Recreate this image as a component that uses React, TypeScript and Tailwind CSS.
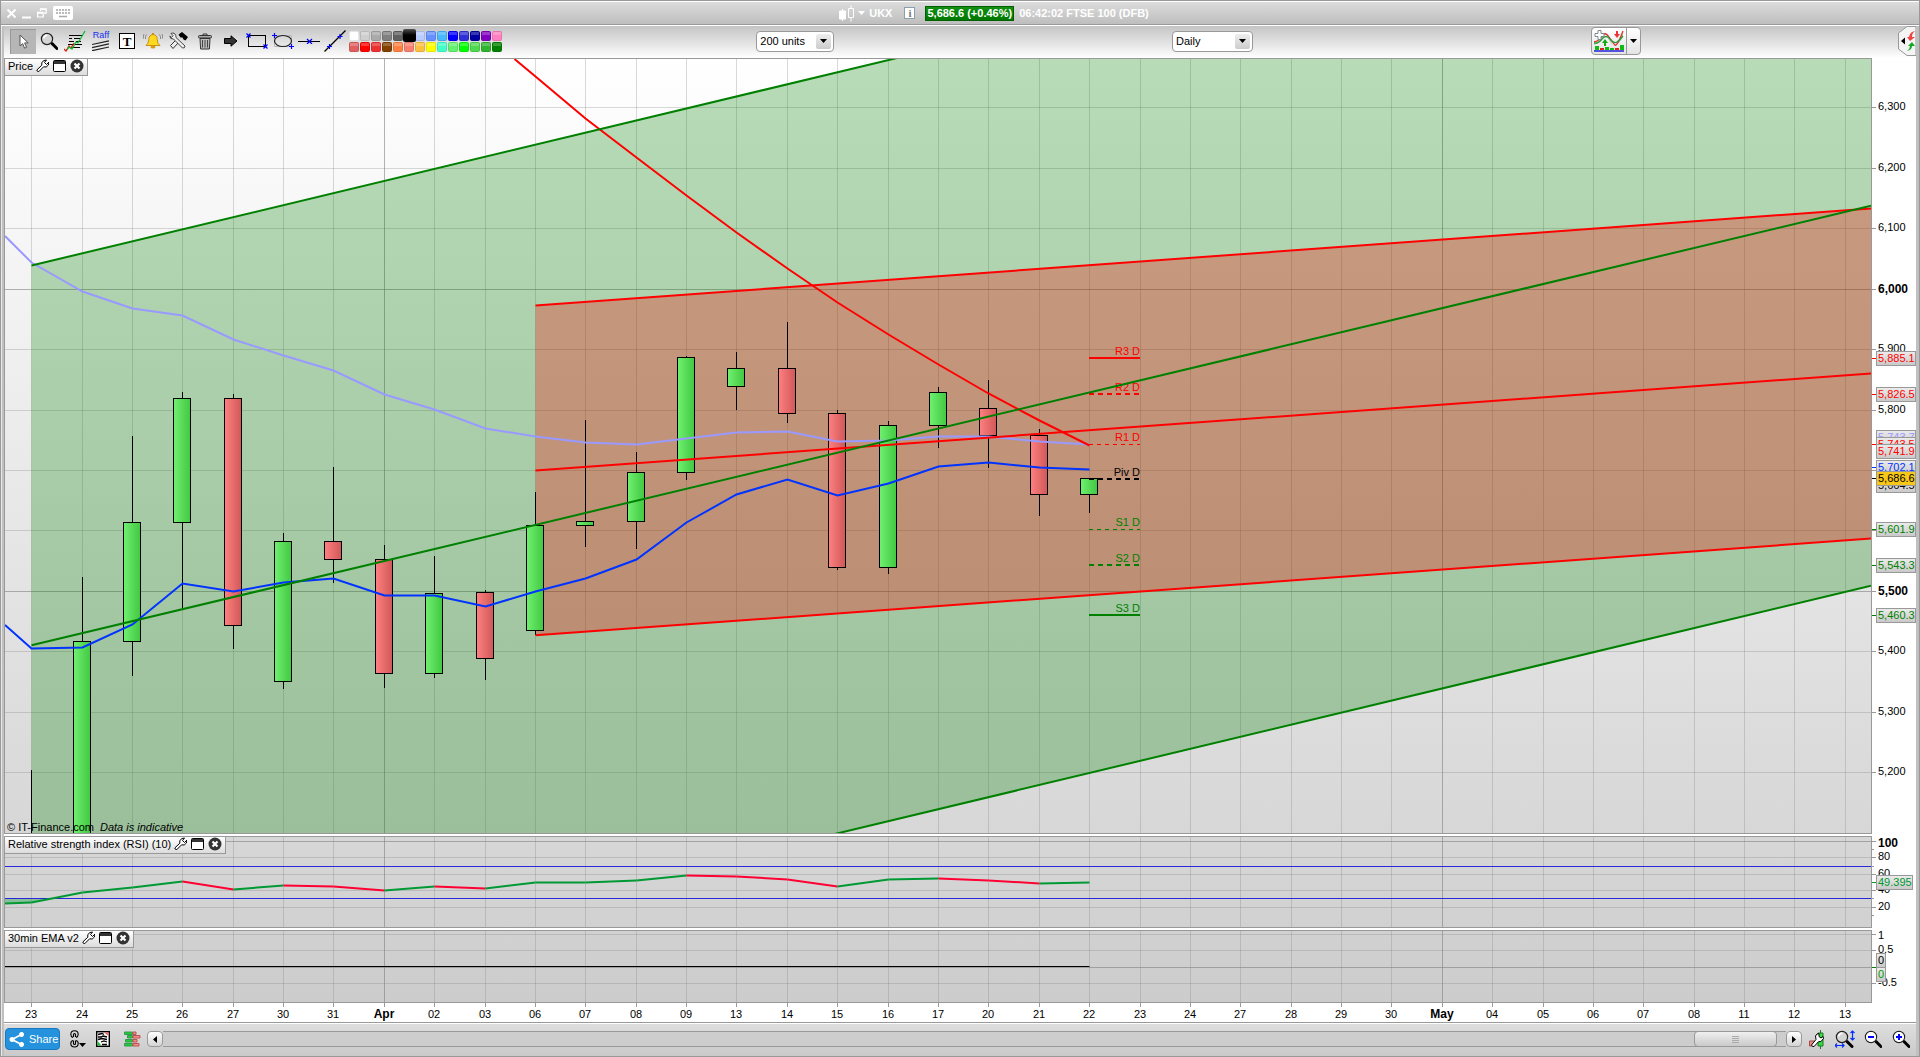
import React from "react";

type Point = [number, number];

const DATES = [
  "23", "24", "25", "26", "27", "30", "31", "Apr", "02", "03", "06", "07", "08", "09", "13", "14", "15", "16", "17",
  "20", "21", "22", "23", "24", "27", "28", "29", "30", "May", "04", "05", "06", "07", "08", "11", "12", "13",
];

const isMonth = (label: string) => label === "Apr" || label === "May";
const colX = (i: number) => Math.floor(31.65 + 50.38 * i) + 0.5;

/* column, high, body top, body bottom, low, rising */
const CANDLES: [number, number, number, number, number, boolean][] = [
  [1, 577, 641.5, 900.5, 910, true],
  [2, 436, 522.5, 641.5, 676, true],
  [3, 392, 398.5, 522.5, 608, true],
  [4, 394, 398.5, 625.5, 649, false],
  [5, 533, 541.5, 681.5, 689, true],
  [6, 467, 541.5, 559.5, 583, false],
  [7, 545, 559.5, 673.5, 688, false],
  [8, 556, 593.5, 673.5, 678, true],
  [9, 590, 592.5, 658.5, 680, false],
  [10, 492, 525.5, 630.5, 635, true],
  [11, 420, 521.5, 525.5, 547, true],
  [12, 452, 472.5, 521.5, 549, true],
  [13, 356, 357.5, 472.5, 480, true],
  [14, 352, 368.5, 386.5, 410, true],
  [15, 322, 368.5, 413.5, 423, false],
  [16, 410, 413.5, 567.5, 570, false],
  [17, 421, 425.5, 567.5, 574, true],
  [18, 387, 392.5, 425.5, 448, true],
  [19, 380, 408.5, 435.5, 468, false],
  [20, 429, 435.5, 494.5, 516, false],
  [21, 478, 478.5, 494.5, 513, true],
];

const FAST = [648, 647, 624, 583, 591, 582, 578, 595, 595, 606, 591, 578, 559, 522, 494, 479, 495, 483, 466, 462, 467, 469];
const SLOW = [262, 291, 308, 315, 339, 355, 370, 394, 409, 428, 436, 442, 444, 438, 432, 431, 441, 440, 436, 436, 441, 444];
const LONG = [76, 118, 157, 195, 232, 268, 302, 334, 364, 393, 420, 445];
const RSI = [902, 892, 887, 881, 889, 885, 886, 890, 886, 888, 882, 882, 880, 875, 876, 879, 886, 879, 878, 880, 883, 882];

const line = (pts: Point[]) => pts.map((p) => p.join(",")).join(" ");
const series = (start: Point, ys: number[], from = 0): Point[] => [
  start,
  ...ys.map((y, i): Point => [colX(i + from), y + 0.5]),
];

const PIVOTS = [
  { label: "R3 D", y: 358, color: "#ff0000", width: 2, dash: undefined },
  { label: "R2 D", y: 394, color: "#ff0000", width: 2, dash: "5 4" },
  { label: "R1 D", y: 444.5, color: "#ff0000", width: 1, dash: "4 4" },
  { label: "Piv D", y: 479, color: "#000000", width: 2, dash: "5 4" },
  { label: "S1 D", y: 529.5, color: "#008000", width: 1, dash: "4 4" },
  { label: "S2 D", y: 565, color: "#008000", width: 2, dash: "5 4" },
  { label: "S3 D", y: 615, color: "#008000", width: 2, dash: undefined },
];

/* rows without a label sit behind the price tags */
const PRICE_ROWS: [string, number][] = [
  ["6,300", 107], ["6,200", 168], ["6,100", 228], ["6,000", 289], ["5,900", 349], ["5,800", 410],
  ["", 470], ["", 530], ["5,500", 591], ["5,400", 651], ["5,300", 712], ["5,200", 772],
];
const strongPrice = (label: string) => label === "6,000" || label === "5,500";

const TAGS: { label: string; top: number; color: string; tick?: string; fill?: string }[] = [
  { label: "5,885.1", top: 351, color: "#ff0000", tick: "#ff0000" },
  { label: "5,826.5", top: 387, color: "#ff0000", tick: "#ff0000" },
  { label: "5,743.7", top: 430, color: "#9999ff" },
  { label: "5,743.5", top: 437, color: "#ff0000", tick: "#ff0000" },
  { label: "5,741.9", top: 444, color: "#ff0000" },
  { label: "5,702.1", top: 460, color: "#0033ff", tick: "#0033ff" },
  { label: "5,664.5", top: 478, color: "#000000" },
  { label: "5,686.6", top: 471, color: "#000000", tick: "#000000", fill: "#f8c818" },
  { label: "5,601.9", top: 522, color: "#008000", tick: "#008000" },
  { label: "5,543.3", top: 558, color: "#008000", tick: "#008000" },
  { label: "5,460.3", top: 608, color: "#008000", tick: "#008000" },
];

function GridColumns({ top, bottom }: { top: number; bottom: number }) {
  return (
    <g>
      {DATES.map((d, i) => (
        <line key={i} x1={colX(i)} x2={colX(i)} y1={top} y2={bottom} stroke="#808080" strokeOpacity={isMonth(d) ? 0.6 : 0.3} />
      ))}
    </g>
  );
}

function GridRows({ rows }: { rows: { y: number; strong?: boolean }[] }) {
  return (
    <g>
      {rows.map((r) => (
        <line key={r.y} x1={5} x2={1871} y1={r.y + 0.5} y2={r.y + 0.5} stroke="#808080" strokeOpacity={r.strong ? 0.6 : 0.3} />
      ))}
    </g>
  );
}

function PriceChart() {
  return (
    <svg className="absolute inset-0 size-full" viewBox="5 59 1866 774" preserveAspectRatio="none" role="img" aria-label="FTSE 100 daily price">
      <defs>
        <linearGradient id="up">
          <stop offset="0" stopColor="#70f070" />
          <stop offset="1" stopColor="#42c842" />
        </linearGradient>
        <linearGradient id="down">
          <stop offset="0" stopColor="#ff8080" />
          <stop offset="1" stopColor="#d05858" />
        </linearGradient>
      </defs>
      <GridColumns top={59} bottom={833} />
      <GridRows rows={PRICE_ROWS.map(([l, y]) => ({ y, strong: strongPrice(l) }))} />
      <polygon points="31.5,265.5 1871,-175.5 1871,585.7 31.5,1026.5" fill="#008000" fillOpacity={0.28} />
      <polygon points="535.5,305.5 1871,208.4 1871,538.6 535.5,635.3" fill="#ff0000" fillOpacity={0.28} />
      <line x1={31.5} x2={31.5} y1={770} y2={833} stroke="#000" />
      {CANDLES.map(([i, high, top, bottom, low, up]) => (
        <g key={i} stroke="#000">
          <line x1={colX(i)} x2={colX(i)} y1={high} y2={low} />
          <rect x={colX(i) - 9} y={top} width={17} height={bottom - top} fill={up ? "url(#up)" : "url(#down)"} />
        </g>
      ))}
      <g fill="none" strokeWidth={2}>
        <polyline points={line(series([5, 236], SLOW))} stroke="#9999ff" />
        <polyline points={line(series([5, 625], FAST))} stroke="#0033ff" />
        <polyline points={line(series([514.5, 59], LONG, 10))} stroke="#ff0000" />
      </g>
      {PIVOTS.map((p) => (
        <g key={p.label}>
          <line x1={1089} x2={1140} y1={p.y} y2={p.y} stroke={p.color} strokeWidth={p.width} strokeDasharray={p.dash} />
          <text x={1140} y={Math.floor(p.y) - 3} textAnchor="end" className="text-[11px]" fill={p.color}>{p.label}</text>
        </g>
      ))}
      <g strokeWidth={2}>
        <g stroke="#ff0000">
          <line x1={535.5} y1={305.5} x2={1871} y2={208.4} />
          <line x1={535.5} y1={470.5} x2={1871} y2={373.5} />
          <line x1={535.5} y1={635.3} x2={1871} y2={538.6} />
        </g>
        <g stroke="#008000">
          <line x1={31.5} y1={265.5} x2={1871} y2={-175.5} />
          <line x1={31.5} y1={645.3} x2={1871} y2={205.7} />
          <line x1={31.5} y1={1026.5} x2={1871} y2={585.7} />
        </g>
      </g>
      <text x={7} y={831} className="text-[11px]">© IT-Finance.com</text>
      <text x={100} y={831} className="text-[11px] italic">Data is indicative</text>
    </svg>
  );
}

function RsiChart() {
  const pts = series([5, 903.5], RSI);
  return (
    <svg className="block h-[90px] w-full" viewBox="5 837 1866 90" preserveAspectRatio="none" role="img" aria-label="Relative strength index">
      <GridColumns top={837} bottom={927} />
      <GridRows rows={[{ y: 841, strong: true }, { y: 857 }, { y: 874 }, { y: 890 }, { y: 907 }]} />
      <polygon points="5,898.5 53,898.5 31.5,902.5 5,903.5" fill="#009933" fillOpacity={0.35} />
      <line x1={5} x2={1871} y1={866.5} y2={866.5} stroke="#2828dc" />
      <line x1={5} x2={1871} y1={898.5} y2={898.5} stroke="#2828dc" />
      <g strokeWidth={2}>
        {pts.slice(1).map((p, i) => (
          <line key={i} x1={pts[i][0]} y1={pts[i][1]} x2={p[0]} y2={p[1]} stroke={i > 0 && p[1] > pts[i][1] ? "#ff0033" : "#009933"} />
        ))}
      </g>
    </svg>
  );
}

function EmaChart() {
  return (
    <svg className="block h-[71px] w-full" viewBox="5 931 1866 71" preserveAspectRatio="none" role="img" aria-label="30min EMA">
      <GridColumns top={931} bottom={1002} />
      <GridRows rows={[{ y: 934 }, { y: 950 }, { y: 967, strong: true }, { y: 983 }]} />
      <line x1={5} x2={1089.5} y1={966.5} y2={966.5} stroke="#000" />
    </svg>
  );
}

function Tick({ y, w = 4, color = "#999" }: { y: number; w?: number; color?: string }) {
  return <line x1={1872} x2={1872 + w} y1={y + 0.5} y2={y + 0.5} stroke={color} />;
}

function Tag({ label, top, width, color, fill = "url(#tag)" }: { label: string; top: number; width: number; color: string; fill?: string }) {
  return (
    <g>
      <rect x={1876.5} y={top + 0.5} width={width - 1} height={14} fill={fill} stroke="#999" />
      <text x={1878} y={top + 11} fill={color}>{label}</text>
    </g>
  );
}

function TagGradient() {
  return (
    <defs>
      <linearGradient id="tag" x2="0" y2="1">
        <stop offset="0" stopColor="#ececec" />
        <stop offset="1" stopColor="#c8c8c8" />
      </linearGradient>
    </defs>
  );
}

function PriceAxis() {
  return (
    <svg className="absolute inset-0 size-full text-[11px]" viewBox="1872 58 44 776" preserveAspectRatio="none">
      <TagGradient />
      {PRICE_ROWS.map(([label, y]) => (
        <g key={y}>
          <Tick y={y} />
          {label && (
            <text x={1878} y={strongPrice(label) ? y + 4 : y + 3} className={strongPrice(label) ? "text-[12px] font-bold" : "text-[11px]"}>
              {label}
            </text>
          )}
        </g>
      ))}
      {TAGS.map((t) => (
        <g key={t.label}>
          {t.tick && <Tick y={t.top + 7} color={t.tick} />}
          <Tag label={t.label} top={t.top} width={40} color={t.color} fill={t.fill} />
        </g>
      ))}
    </svg>
  );
}

function RsiAxis() {
  const rows: [string, number][] = [["80", 857], ["60", 874], ["40", 890], ["20", 907]];
  return (
    <svg className="block h-[92px] w-[44px] text-[11px]" viewBox="1872 836 44 92">
      <Tick y={841} />
      <text x={1878} y={847} className="text-[12px] font-bold">100</text>
      {rows.map(([label, y]) => (
        <g key={label}>
          <Tick y={y} />
          <text x={1878} y={y + 3}>{label}</text>
        </g>
      ))}
      {[849, 866, 898, 915].map((y) => <Tick key={y} y={y} w={2} />)}
      <Tick y={882} color="#009933" />
      <Tag label="49.395" top={875} width={37} color="#009933" />
    </svg>
  );
}

function EmaAxis() {
  return (
    <svg className="block h-[73px] w-[44px] text-[11px]" viewBox="1872 930 44 73">
      {[934, 950, 983].map((y) => <Tick key={y} y={y} />)}
      <Tick y={967} color="#008000" />
      <text x={1878} y={939}>1</text>
      <text x={1878} y={953}>0.5</text>
      <text x={1878} y={986}>-0.5</text>
      <Tag label="0" top={953} width={10} color="#000" />
      <Tag label="0" top={967} width={10} color="#009900" />
    </svg>
  );
}

function DateAxis() {
  return (
    <svg className="block h-[19px] w-full" viewBox="5 1003 1866 19" preserveAspectRatio="none">
      {DATES.map((d, i) => (
        <g key={i}>
          <line x1={colX(i)} x2={colX(i)} y1={1003} y2={1007} stroke="#999" />
          <text x={colX(i) - 0.5} y={1018} textAnchor="middle" className={isMonth(d) ? "text-[12px] font-bold" : "text-[11px]"}>{d}</text>
        </g>
      ))}
    </svg>
  );
}

function Icon({ w, h, children }: { w: number; h: number; children: React.ReactNode }) {
  return (
    <svg className="shrink-0" width={w} height={h} viewBox={`0 0 ${w} ${h}`} fill="none" aria-hidden="true">
      {children}
    </svg>
  );
}

function PanelHeader({ title }: { title: string }) {
  return (
    <div className="absolute top-0 left-0 z-10 flex h-[17px] items-center gap-1 border-r border-b border-[#999] bg-linear-to-b from-white to-[#dcdcdc] pr-[3px] pb-0.5 pl-[3px]">
      <h2 className="-mr-px leading-[14px] whitespace-nowrap">{title}</h2>
      <button type="button" aria-label={`Configure ${title}`}>
        <Icon w={13} h={14}>
          <path d="M8 1.5 L10.5 1 L8.5 3.5 L10.5 5.5 L13 3 L12.4 6 L10.2 8 L7.6 7.8 L2.8 12.6 Q1.2 13 .8 11 L5.8 6.2 L5.8 3.5 Z" fill="#fff" stroke="#000" strokeWidth="1" />
        </Icon>
      </button>
      <button type="button" aria-label={`Maximise ${title}`}>
        <Icon w={13} h={14}>
          <rect x=".5" y="1.5" width="12" height="11" rx="1" fill="#fff" stroke="#000" />
          <path d="M1 2h11v3H1z" fill="#333" />
        </Icon>
      </button>
      <button type="button" aria-label={`Close ${title}`}>
        <Icon w={14} h={14}>
          <circle cx="7" cy="7" r="6.5" fill="#333" />
          <path d="M4.5 4.5l5 5m0-5l-5 5" stroke="#fff" strokeWidth="2.2" />
        </Icon>
      </button>
    </div>
  );
}

function Lens({ children }: { children?: React.ReactNode }) {
  return (
    <>
      <path d="M12 11.5l5 5" stroke="#000" strokeWidth="3" strokeLinecap="round" />
      <circle cx="7" cy="7" r="5.6" fill="#d4d4d4" stroke="#222" strokeWidth="1.2" />
      <path d="M3.6 6.4a3.6 3.6 0 0 1 3.6-3" stroke="#fff" strokeWidth="1.6" />
      {children}
    </>
  );
}

const TOOLS: { name: string; icon: React.ReactNode }[] = [
  {
    name: "Pointer",
    icon: (
      <Icon w={12} h={16}>
        <path d="M2 1v11l2.6-2.4 2 4.6 2-.9-2-4.4h3.6z" fill="#fff" stroke="#555" />
      </Icon>
    ),
  },
  { name: "Zoom", icon: <Icon w={18} h={18}><Lens /></Icon> },
  {
    name: "Indicators",
    icon: (
      <Icon w={22} h={22}>
        <path d="M5 5.5h14M5 8.5h3m2 0h6m-11 3h5m2 0h5m-13 3h14M6 17.5h10" stroke="#000" strokeWidth="1.2" />
        <path d="M0 19l2 2 3-5 2 2 3-5" stroke="#e11" strokeWidth="1.3" />
        <path d="M3 20l2-3 3 2 4-7 2 1 7-12" stroke="#1b3" strokeWidth="1.3" />
      </Icon>
    ),
  },
  {
    name: "Raff regression",
    icon: (
      <span className="flex flex-col items-center">
        <span className="text-[9px] leading-[9px] text-[#1530ee]">Raff</span>
        <Icon w={18} h={11}>
          <path d="M0 4.5L17 .8M0 7.6L17 3.9M0 10.7L17 7" stroke="#222" strokeWidth="1.2" />
        </Icon>
      </span>
    ),
  },
  {
    name: "Text",
    icon: (
      <span className="flex size-4 items-center justify-center border border-black bg-white font-['Liberation_Serif',serif] text-[13px] leading-none font-bold">T</span>
    ),
  },
  {
    name: "Alert",
    icon: (
      <Icon w={20} h={18}>
        <path d="M3 13.5q2.8-2 2.8-6 0-4.500 4.200-5 4.200.5 4.200 5 0 4 2.800 6z" fill="#ffd820" stroke="#c89010" />
        <path d="M10 1v2" stroke="#c89010" strokeWidth="2" />
        <ellipse cx="10" cy="15" rx="2.500" ry="1.500" fill="#d89c10" />
        <path d="M3.500 2.500Q2 4.500 2.500 7M1 2Q0 4 .5 6.500M16.500 2.500Q18 4.500 17.500 7M19 2q1 2 .5 4.500" stroke="#888" />
      </Icon>
    ),
  },
  {
    name: "Settings",
    icon: (
      <Icon w={20} h={18}>
        <path d="M6 9L1.500 13.500 4 16.500 9 11" fill="#eee" stroke="#333" />
        <path d="M2 1.500l2 2-1.500 2L.8 4Q1 7.500 4.500 7l9 9q2.500.5 2.500-2l-9-8.500Q7 1 3.500 1z" fill="#eee" stroke="#444" />
        <path d="M9.500 2.500L13 0l6 5-2.500 3.500-2-1-1-2-2 0z" fill="#000" />
      </Icon>
    ),
  },
  {
    name: "Delete",
    icon: (
      <Icon w={14} h={17}>
        <path d="M5 2.500V1h4v1.500" stroke="#333" />
        <rect x=".5" y="2.500" width="13" height="2.500" rx="1" fill="#aaa" stroke="#333" />
        <path d="M2 5.500h10l-.6 10.500H2.600z" fill="#bbb" stroke="#333" />
        <path d="M4.500 7v7.500M7 7v7.500M9.500 7v7.500" stroke="#444" />
      </Icon>
    ),
  },
  {
    name: "Arrow",
    icon: <Icon w={14} h={12}><path d="M.5 3.500h6.500V.8L13 6l-6 5.200V8.500H.5z" fill="#333" stroke="#000" /></Icon>,
  },
  {
    name: "Rectangle",
    icon: (
      <Icon w={22} h={16}>
        <rect x="2.500" y="2.500" width="17" height="11" stroke="#000" />
        <path d="M.5 .5l4 4m0-4l-4 4M17.500 11.500l4 4m0-4l-4 4" stroke="#00f" strokeWidth="1.200" />
      </Icon>
    ),
  },
  {
    name: "Ellipse",
    icon: (
      <Icon w={22} h={16}>
        <path d="M2.500 2.500h17v11h-17z" stroke="#bbb" />
        <ellipse cx="11" cy="8" rx="8.500" ry="5.500" stroke="#222" strokeWidth="1.200" />
        <path d="M2.500 0v5M0 2.500h5M19.500 11v5M17 13.500h5" stroke="#00f" strokeWidth="1.200" />
      </Icon>
    ),
  },
  {
    name: "Horizontal line",
    icon: (
      <Icon w={22} h={6}>
        <path d="M0 3.500h22" stroke="#000" />
        <path d="M9 1l5 5m0-5L9 6" stroke="#00f" strokeWidth="1.200" />
      </Icon>
    ),
  },
  {
    name: "Trend line",
    icon: (
      <Icon w={22} h={22}>
        <path d="M.5 21.500L21.500 .5" stroke="#000" strokeWidth="1.200" />
        <path d="M3 16.500h5M5.500 14v5M13.500 6.500h5M16 4v5" stroke="#00f" strokeWidth="1.200" />
      </Icon>
    ),
  },
];

const PALETTE: [string, string][] = [
  ["White", "bg-white border-[#e4e4e4]"], ["Silver", "bg-[#cfcfcf]"], ["Light grey", "bg-[#aaaaaa]"], ["Grey", "bg-[#808080]"],
  ["Dark grey", "bg-[#606060]"], ["Black", "bg-black"], ["Pale blue", "bg-[#b8ccff]"], ["Cornflower", "bg-[#6690ff]"],
  ["Sky", "bg-[#48b8ff]"], ["Blue", "bg-[#0000ff]"], ["Royal blue", "bg-[#3030d8]"], ["Navy", "bg-[#0000a0]"],
  ["Purple", "bg-[#8000c0]"], ["Pink", "bg-[#ff80c0]"], ["Rose", "bg-[#e06060]"], ["Red", "bg-[#ff0000]"],
  ["Scarlet", "bg-[#ee3030]"], ["Brown", "bg-[#804000]"], ["Orange", "bg-[#ff8040]"], ["Salmon", "bg-[#f88070]"],
  ["Amber", "bg-[#ffc040]"], ["Yellow", "bg-[#ffff00]"], ["Aqua", "bg-[#40ffc8]"], ["Light green", "bg-[#66f070]"],
  ["Lime", "bg-[#00ff00]"], ["Mid green", "bg-[#50d850]"], ["Leaf", "bg-[#30b430]"], ["Green", "bg-[#008000]"],
];

function Palette() {
  return (
    <div className="ml-px grid shrink-0 grid-cols-14" role="group" aria-label="Colours">
      {PALETTE.map(([name, color]) => (
        <button key={name} type="button" aria-label={name} className="relative size-[11px] pt-px pr-px">
          {name === "Black" ? (
            <span className="absolute -inset-px z-10 rounded-xs bg-linear-to-b from-[#555] to-black to-60%" />
          ) : (
            <span className={`block size-full rounded-xs border border-black/10 inset-shadow-[0_3px_0_rgba(255,255,255,0.22)] ${color}`} />
          )}
        </button>
      ))}
    </div>
  );
}

function Choice({ label, options, className }: { label: string; options: string[]; className: string }) {
  return (
    <div className={`relative h-[21px] shrink-0 ${className}`}>
      <select aria-label={label} className="size-full appearance-none rounded-sm border border-[#999] bg-white pl-[3px] text-[11px] text-black">
        {options.map((o) => <option key={o}>{o}</option>)}
      </select>
      <span className="pointer-events-none absolute inset-y-[3px] right-[3px] flex w-[15px] items-center justify-center rounded-xs bg-linear-to-b from-[#eee] to-[#ccc]">
        <Icon w={7} h={4}><path d="M0 0h7L3.500 4z" fill="#000" /></Icon>
      </span>
    </div>
  );
}

function TitleBar() {
  return (
    <header className="flex h-[23px] items-center border-t border-white bg-linear-to-b from-[#dcdcdc] to-[#bebebe] font-bold text-white">
      <div className="flex shrink-0 items-center pl-[5px]">
        <button type="button" aria-label="Close" className="mr-[5px]">
          <Icon w={11} h={11}><path d="M1.500 1.500l8 8m0-8l-8 8" stroke="#fff" strokeWidth="1.800" /></Icon>
        </button>
        <button type="button" aria-label="Minimise" className="mr-1.5">
          <Icon w={9} h={11}><path d="M0 9.500h9" stroke="#fff" strokeWidth="2" /></Icon>
        </button>
        <button type="button" aria-label="Restore" className="mr-1.5">
          <Icon w={10} h={10}><path d="M3.500 3V.8h5.700v4.400H7M.6 4.400h5.600v4.600H.6zM.6 5.200h5.600M3.500 1.500h5.700" stroke="#fff" strokeWidth="1.200" /></Icon>
        </button>
        <button type="button" aria-label="Keyboard">
          <Icon w={20} h={14}>
            <rect width="20" height="14" rx="2" fill="#fff" />
            <path d="M3 4h14M3 7h14" stroke="#bbb" strokeWidth="2" strokeDasharray="2 1" />
            <path d="M6 10.500h8" stroke="#aaa" strokeWidth="1.500" />
          </Icon>
        </button>
      </div>
      <div className="flex min-w-0 flex-1 items-center justify-center pr-1 whitespace-nowrap">
        <Icon w={15} h={17}>
          <path d="M.5 6h6v8h-6zM3.500 4v12" fill="#fff" stroke="#fff" />
          <path d="M9.500 3.500h5v9h-5zM12 .5v3M12 12.500v4" stroke="#fff" />
        </Icon>
        <button type="button" className="mr-3 ml-1 flex items-center gap-1">
          <Icon w={7} h={4}><path d="M0 0h7L3.500 4z" fill="#fff" /></Icon>
          UKX
        </button>
        <button type="button" aria-label="Information" className="mr-2.5 flex h-3 w-[11px] items-center justify-center border border-[#8aa0ac] bg-white font-['Liberation_Serif',serif] text-[11px] leading-none font-bold text-[#777]">
          i
        </button>
        <span className="mr-[5px] border border-[#006000] bg-linear-to-b from-[#109010] to-[#007800] px-px leading-[13px]">5,686.6 (+0.46%)</span>
        <h1>06:42:02 FTSE 100 (DFB)</h1>
      </div>
    </header>
  );
}

function Toolbar() {
  return (
    <div className="flex h-8 items-center bg-linear-to-b from-[#c4c4c4] to-white pb-0.5">
      <div className="ml-1.5 flex shrink-0">
        {TOOLS.map((t, i) => (
          <button
            key={t.name}
            type="button"
            aria-label={t.name}
            className={`flex h-[25px] w-[26px] items-center justify-center ${i === 0 ? "border-t border-l border-[#999] bg-[#b6b6b6]" : ""}`}
          >
            {t.icon}
          </button>
        ))}
      </div>
      <Palette />
      <div className="grow-3" />
      <Choice label="History length" options={["200 units", "500 units"]} className="w-[78px]" />
      <div className="grow-4" />
      <Choice label="Timeframe" options={["Daily", "Weekly"]} className="w-[81px]" />
      <div className="grow-4" />
      <button type="button" aria-label="Add indicator" className="mr-1 flex h-7 w-[50px] shrink-0 items-center rounded-sm border border-[#999] bg-linear-to-b from-white to-[#e4e4e4]">
        <span className="flex h-full w-[35px] items-center justify-center border-r border-[#999]">
          <Icon w={30} h={22}>
            <path d="M0 12q5 0 7-5t4-4q4 2 6 8t4 4q4-3 8-13v5q-4 8-9 8-4-1-6-7t-4-2q-4 8-10 9z" fill="#bcd8b4" />
            <path d="M0 12q5-1 8-6t7 1 6 8 8-14" stroke="#e03030" strokeWidth="1.300" />
            <path d="M0 13q4 1 8-4t8 0 7 3 6-6" stroke="#2a9a3a" strokeWidth="1.300" />
            <path d="M4 .5h3v3h3v3H7v3H4v-3H1v-3h3z" fill="#fff" stroke="#7a8a90" />
            <path d="M22 1h2v3h2l-3 4-3-4h2z" fill="#e33" />
            <path d="M11 9l3 4h-2v3h-2v-3H8z" fill="#1a1" />
            <path d="M1 16h4v4H1zM11 17h4v3h-4zM16 18h4v2h-4zM26 15h4v5h-4z" fill="#1b1" />
            <path d="M6 18h4v2H6zM21 18h4v2h-4z" fill="#d22" />
            <path d="M0 21h30" stroke="#22d" strokeWidth="1.500" />
          </Icon>
        </span>
        <span className="flex flex-1 justify-center"><Icon w={7} h={4}><path d="M0 0h7L3.500 4z" fill="#000" /></Icon></span>
      </button>
      <div className="grow-3" />
      <button type="button" aria-label="Open trading panel" className="shrink-0">
        <Icon w={18} h={30}>
          <path d="M18 .5H9L.5 7v16L9 29.500h9z" fill="#f4f4f4" stroke="#999" />
          <path d="M7 11.500v7L3 15z" fill="#000" />
          <path d="M18 5q-4 1-4 6h3l-5 4-3-4h2q1-6 7-6z" fill="#e44" />
          <path d="M9 25q5-1 5-5h3l-3-4-4 4h2q0 3-3 5z" fill="#1a2" />
        </Icon>
      </button>
    </div>
  );
}

function BottomBar() {
  return (
    <footer className="flex h-[33px] shrink-0 items-center border-t border-white bg-linear-to-b from-[#dedede] to-[#cacaca] pb-0.5">
      <button type="button" className="ml-px flex h-[22px] w-[55px] shrink-0 items-center gap-[5px] rounded-sm border border-[#1a78c0] bg-[#2492dc] pl-[3px] text-white">
        <Icon w={15} h={15}>
          <path d="M12.500 2.500L3 7.500l9.500 5" stroke="#fff" strokeWidth="1.800" />
          <path d="M12.500 0a2.500 2.500 0 1 0 .1 0zM3 5a2.500 2.500 0 1 0 .1 0zM12.500 10a2.500 2.500 0 1 0 .1 0z" fill="#fff" />
        </Icon>
        Share
      </button>
      <button type="button" aria-label="Link charts" className="ml-2.5">
        <Icon w={16} h={18}>
          <path d="M3 7.500Q.8 6.500.8 4.500.8.800 4.500.800T8.200 4.500q0 2-2.200 3M3.500 7V4.500q0-1 1-1t1 1V7M3 10.500Q.8 11 .8 13.500q0 3.500 3.700 3.500t3.700-3.500q0-2.500-2.200-3M3.500 10.500v3q0 1 1 1t1-1v-3" stroke="#000" strokeWidth="1.100" />
          <path d="M9 13h7l-3.500 4z" fill="#000" />
        </Icon>
      </button>
      <button type="button" aria-label="Order list" className="ml-2.5">
        <Icon w={14} h={16}>
          <rect x=".7" y=".7" width="12.600" height="14.600" fill="#fff" stroke="#000" strokeWidth="1.400" />
          <path d="M2 3.500l4-1 2 1M2 6h3l2-1 4 1M2 8.500l4-1 5 1M5 11l3-1 3 1M6 13.500h5" stroke="#000" strokeWidth="1.300" />
          <path d="M8 1.500h4.500V5z" fill="#e66" />
          <path d="M1.500 10l4 4.500h-4z" fill="#2b3" />
        </Icon>
      </button>
      <button type="button" aria-label="Order book" className="ml-3.5">
        <Icon w={17} h={16}>
          <path d="M.5 1h8v2.500h-8zM3.500 4.500h5V7h-5zM1.500 8.500h7V11h-7zM.5 12.500h8V15h-8z" fill="#2c3" stroke="#395" />
          <path d="M9 1h3v2.500H9zM9 4.500h7V7H9zM9 8.500h4V11H9zM9 12.500h6V15H9z" fill="#f88" stroke="#b55" />
        </Icon>
      </button>
      <div className="ml-1.5 flex h-4 min-w-0 flex-1 items-stretch">
        <button type="button" aria-label="Scroll left" className="flex w-4 shrink-0 items-center justify-center rounded-sm border border-[#999] bg-linear-to-b from-white to-[#d4d4d4]">
          <Icon w={4} h={7}><path d="M4 0v7L0 3.500z" fill="#000" /></Icon>
        </button>
        <div className="flex flex-1 justify-end border-y border-[#999] bg-[#cdcdcd]">
          <div className="-my-px mr-[9px] flex w-[83px] items-center justify-center rounded-sm border border-[#999] bg-linear-to-b from-[#f0f0f0] to-[#cacaca]">
            <Icon w={7} h={7}><path d="M0 .5h7M0 2.500h7M0 4.500h7M0 6.500h7" stroke="#aaa" /></Icon>
          </div>
        </div>
        <button type="button" aria-label="Scroll right" className="flex w-4 shrink-0 items-center justify-center rounded-sm border border-[#999] bg-linear-to-b from-white to-[#d4d4d4]">
          <Icon w={4} h={7}><path d="M0 0v7l4-3.500z" fill="#000" /></Icon>
        </button>
      </div>
      <div className="mr-1.5 ml-[7px] flex shrink-0 items-center gap-[9px]">
        <button type="button" aria-label="Chart settings">
          <Icon w={17} h={19}>
            <path d="M9 3h5v13H9z" fill="#3d4" stroke="#272" />
            <path d="M11.500 0v3M11.500 16v3" stroke="#272" />
            <path d="M.5 11h5v5h-5z" fill="#e88" stroke="#a44" />
            <path d="M8 4l2-.5v3l2 1.500 2-1.500.5 2-2.500 3-2.500.2L5 16.500Q3 17 2.500 15L7 9.500 6.500 6z" fill="#fff" stroke="#000" />
          </Icon>
        </button>
        <button type="button" aria-label="Fit zoom">
          <Icon w={20} h={18}>
            <Lens />
            <path d="M17.500 1v9M15.500 3l2-2 2 2M15.500 8l2 2 2-2M0 15.500h9M2 13.500l-2 2 2 2M7 13.500l2 2-2 2" stroke="#0030ff" strokeWidth="1.200" />
          </Icon>
        </button>
        <button type="button" aria-label="Zoom out">
          <Icon w={18} h={18}><Lens><circle cx="7" cy="7" r="5" fill="#fff" /><path d="M4 7h6" stroke="#00f" strokeWidth="2" /></Lens></Icon>
        </button>
        <button type="button" aria-label="Zoom in" className="ml-px">
          <Icon w={18} h={18}><Lens><circle cx="7" cy="7" r="5" fill="#fff" /><path d="M4 7h6M7 4v6" stroke="#00f" strokeWidth="2" /></Lens></Icon>
        </button>
      </div>
    </footer>
  );
}

export default function App() {
  return (
    <div className="flex h-screen min-h-[640px] w-full flex-col border border-[#999] bg-[#c0c0c0] font-['Liberation_Sans',Arial,sans-serif] text-[11px] text-black">
      <TitleBar />
      <div className="border-b border-white bg-white">
        <div className="h-px bg-[#999]" />
      </div>
      <main className="flex min-h-0 flex-1 flex-col border-l border-[#e8e8e8] pr-[3px] pl-0.5">
        <Toolbar />
        <div className="flex min-h-0 flex-1 flex-col bg-white">
          <section className="mb-0.5 flex min-h-0 flex-1">
            <div className="relative flex-1 overflow-hidden border border-[#999] bg-linear-to-b from-white to-[#d7d7d7]">
              <PriceChart />
              <PanelHeader title="Price" />
            </div>
            <div className="relative w-[44px] shrink-0"><PriceAxis /></div>
          </section>
          <section className="mb-0.5 flex shrink-0">
            <div className="relative flex-1 border border-[#999] bg-linear-to-b from-[#d7d7d7] to-[#d1d1d1]">
              <RsiChart />
              <PanelHeader title="Relative strength index (RSI) (10)" />
            </div>
            <RsiAxis />
          </section>
          <section className="flex shrink-0">
            <div className="relative flex-1 border border-[#999] bg-linear-to-b from-[#d1d1d1] to-[#cccccc]">
              <EmaChart />
              <PanelHeader title="30min EMA v2" />
            </div>
            <EmaAxis />
          </section>
          <div className="shrink-0 border-b border-[#999]">
            <div className="mr-[44px] px-px"><DateAxis /></div>
          </div>
        </div>
        <BottomBar />
      </main>
    </div>
  );
}
